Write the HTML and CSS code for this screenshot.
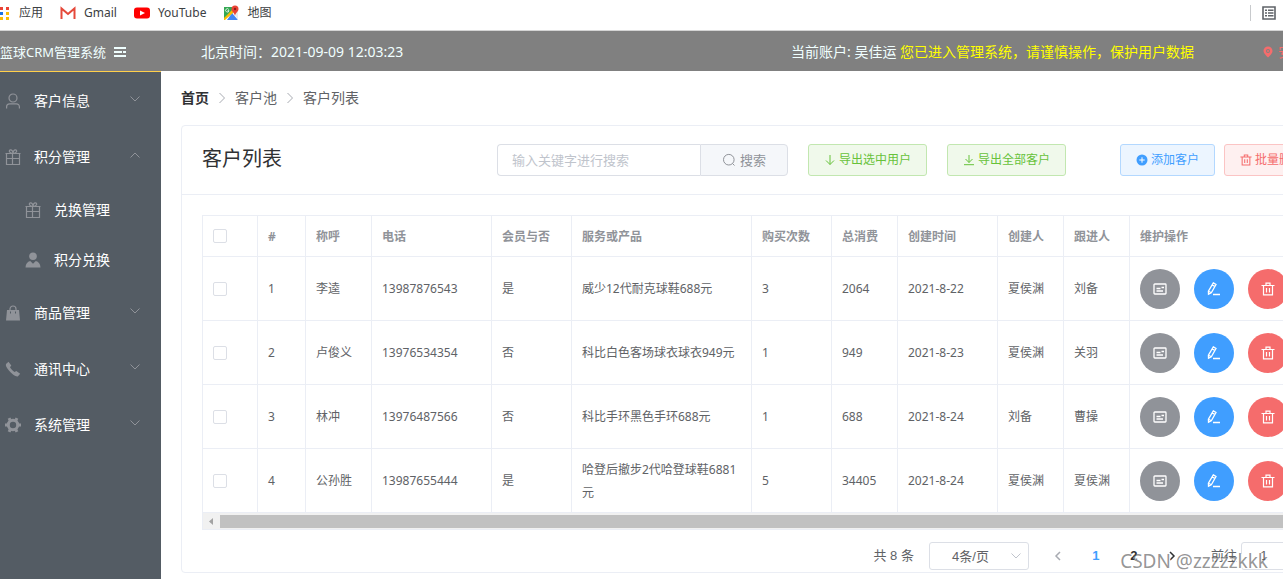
FILE: index.html
```html
<!DOCTYPE html>
<html lang="zh-CN">
<head>
<meta charset="utf-8">
<title>篮球CRM管理系统</title>
<link rel="stylesheet" href="styles.css">
</head>
<body>
<svg class="sprite" aria-hidden="true">
  <symbol id="user" viewBox="0 0 16 16"><circle cx="8" cy="5" r="4" fill="none" stroke="currentColor" stroke-width="1.2"/><path d="M1.6 15.5v-1.7a3 3 0 0 1 3-3h6.8a3 3 0 0 1 3 3v1.7" fill="none" stroke="currentColor" stroke-width="1.2"/></symbol>
  <symbol id="gift" viewBox="0 0 16 16"><path d="M.5 4.500h15M1.500 4.500v11h13v-11M1.500 9.500h13M7.500 4.500v11M8 4.500C4 4.500 3.500 1 5.500.8 7 .7 8 2.500 8 4.500 8 2.500 9 .7 10.500.8 12.500 1 12 4.500 8 4.500" fill="none" stroke="currentColor" stroke-width="1.200"/></symbol>
  <symbol id="user-solid" viewBox="0 0 16 16"><circle cx="8" cy="4.300" r="3.800" fill="currentColor"/><path d="M.5 15.500c.2-3.500 1.800-5.800 4.700-6.500L8 11.800 10.800 9c2.900.7 4.500 3 4.700 6.500z" fill="currentColor"/></symbol>
  <symbol id="bag" viewBox="0 0 16 16"><path d="M2 5h12l1 10.500H1zM5 6.500v2h1v-2zm5 0v2h1v-2z" fill="currentColor" fill-rule="evenodd"/><path d="M5 5V4a3 3 0 0 1 6 0v1" fill="none" stroke="currentColor" stroke-width="1.200"/></symbol>
  <symbol id="phone" viewBox="0 0 16 16"><path d="M1 3 3.500.8 6.300 4.500 5 6.200c1 1.800 2.600 3.500 4.600 4.700l1.700-.9 3.900 2.700-2.200 2.600c-1 .5-2.600 0-4.700-1.500C5 11.300 2.800 8.500 1.300 5.800.8 4.700.7 3.700 1 3z" fill="currentColor"/></symbol>
  <symbol id="gear" viewBox="0 0 16 16"><circle cx="8" cy="8" r="4.700" fill="none" stroke="currentColor" stroke-width="3"/><g stroke="currentColor" stroke-width="3"><path d="M0 8h3M13 8h3M4 1.100l1.200 2.200M12 1.100l-1.200 2.200M4 14.900l1.200-2.200M12 14.900l-1.200-2.200"/></g></symbol>
  <symbol id="down" viewBox="0 0 12 12"><path d="M1.500 3.500 6 8l4.500-4.500" fill="none" stroke="currentColor"/></symbol>
  <symbol id="right" viewBox="0 0 12 12"><path d="M3.500 1 8.500 6l-5 5" fill="none" stroke="currentColor"/></symbol>
  <symbol id="page-next" viewBox="0 0 12 12"><path d="M4 2l4 4-4 4" fill="none" stroke="currentColor" stroke-width="1.500"/></symbol>
  <symbol id="search" viewBox="0 0 14 14"><circle cx="6.800" cy="6.700" r="5.300" fill="none" stroke="currentColor"/><path d="m10.500 10.500 2 2" stroke="currentColor"/></symbol>
  <symbol id="arrow-down" viewBox="0 0 12 12"><path d="M6 1v9.500M2 6.500l4 4 4-4" fill="none" stroke="currentColor"/></symbol>
  <symbol id="download" viewBox="0 0 12 12"><path d="M6 1v7.500M2.500 5 6 8.500 9.500 5M1 10.700h10" fill="none" stroke="currentColor"/></symbol>
  <symbol id="plus" viewBox="0 0 12 12"><circle cx="6" cy="6" r="5.500" fill="currentColor"/><path d="M3.300 6h5.400M6 3.300v5.400" stroke="#fff"/></symbol>
  <symbol id="trash" viewBox="0 0 14 14"><path d="M.5 3.500h13M5 3V1.200h4V3M2.500 3.500v9.300h9V3.500M5.500 6v4.500M8.500 6v4.500" fill="none" stroke="currentColor" stroke-width="1.200"/></symbol>
  <symbol id="card" viewBox="0 0 14 14"><rect x="1" y="2" width="12" height="10" rx=".8" fill="none" stroke="currentColor" stroke-width="1.300"/><path d="M3.500 6.500h4M3.500 9h6.500M8.500 5.500h2.500" stroke="currentColor" stroke-width="1.500"/></symbol>
  <symbol id="edit" viewBox="0 0 14 14"><path d="M6.300.9 9 2.500 4.300 10.800 1.500 12.300 1.400 9.200zM5.200 2.900l2.700 1.600M1.500 9.200l2.800 1.600M6 12.500h7" fill="none" stroke="currentColor" stroke-width="1.300"/></symbol>
</svg>

<nav class="bookmarks" aria-label="书签栏">
  <a class="bookmark" href="#"><svg class="apps" viewBox="0 0 11 14"><path fill="#ea4335" d="M0 1h3v3H0zM6 1h3v3H6z"/><path fill="#1a73e8" d="M0 6h3v3H0z"/><path fill="#fbbc04" d="M6 6h3v3H6zM0 11h3v3H0zM6 11h3v3H6z"/></svg>应用</a>
  <a class="bookmark" href="#"><svg class="logo" viewBox="0 0 16 16"><path fill="#fff" d="M1 3h14v11H1z"/><path fill="none" stroke="#e5493a" stroke-width="2" d="M1.500 14V3.500L8 9l6.500-5.500V14"/></svg>Gmail</a>
  <a class="bookmark" href="#"><svg class="logo" viewBox="0 0 16 16"><rect y="2.500" width="16" height="11" rx="3" fill="red"/><path fill="#fff" d="m6 5.500 5 2.500-5 2.500z"/></svg>YouTube</a>
  <a class="bookmark" href="#"><svg class="logo" viewBox="0 0 16 16"><path fill="#34a853" d="M1 2h9v6L1 14z"/><path fill="#4285f4" d="m9 8 6 7H4z"/><path fill="#fbbc04" d="m9 5 2 2-9 8H1v-2z"/><path fill="#e8eaed" d="m10 7 5-2v10z"/><path fill="#ea4335" d="M8.500 4a3.500 3.500 0 0 1 7 0c0 3-3 3.500-3.500 7-.5-3.500-3.500-4-3.500-7z"/><circle cx="12" cy="4" r="1.200" fill="#8c1d18"/><path d="M5.800 4.500a1.700 1.700 0 1 0 .2 1.200H4.500" fill="none" stroke="#fff" stroke-width=".8"/></svg>地图</a>
  <button class="reading" type="button" aria-label="阅读清单"><svg viewBox="0 0 14 14"><path d="M1 1h12v12H1z" fill="none" stroke="#5f6368" stroke-width="1.600"/><path d="M3 4.200h2M6 4.200h5.500M3 7h2M6 7h5.500M3 9.800h2M6 9.800h5.500" stroke="#5f6368" stroke-width="1.400"/></svg></button>
</nav>

<div class="app">
  <header class="topbar">
    <span class="brand">篮球CRM管理系统<svg viewBox="0 0 12 12"><path d="M0 2h12M0 6h8M9 6h3M0 10h12" stroke="currentColor" stroke-width="2.200"/></svg></span>
    <span class="clock">北京时间：2021-09-09 12:03:23</span>
    <span class="account">当前账户: 吴佳运 <em>您已进入管理系统，请谨慎操作，保护用户数据</em></span>
    <a class="logout" href="#"><svg viewBox="0 0 12 12"><path fill="currentColor" fill-rule="evenodd" d="M6 .5a4.500 4.500 0 0 1 4.500 4.500c0 2.500-2.500 4.300-4.500 6.500C4 9.300 1.500 7.500 1.500 5A4.500 4.500 0 0 1 6 .5zM6 3a2 2 0 1 0 0 4 2 2 0 0 0 0-4z"/><circle cx="6" cy="5" r="1" fill="currentColor"/></svg>安全退出</a>
  </header>

  <div class="body">
    <nav class="menu">
      <a class="item" href="#"><svg class="mi"><use href="#user"/></svg>客户信息<svg class="caret"><use href="#down"/></svg></a>
      <a class="item" href="#"><svg class="mi"><use href="#gift"/></svg>积分管理<svg class="caret open"><use href="#down"/></svg></a>
      <a class="item sub" href="#"><svg class="mi"><use href="#gift"/></svg>兑换管理</a>
      <a class="item sub" href="#"><svg class="mi"><use href="#user-solid"/></svg>积分兑换</a>
      <a class="item" href="#"><svg class="mi"><use href="#bag"/></svg>商品管理<svg class="caret"><use href="#down"/></svg></a>
      <a class="item" href="#"><svg class="mi"><use href="#phone"/></svg>通讯中心<svg class="caret"><use href="#down"/></svg></a>
      <a class="item" href="#"><svg class="mi"><use href="#gear"/></svg>系统管理<svg class="caret"><use href="#down"/></svg></a>
    </nav>

    <main class="main">
      <nav class="crumbs" aria-label="面包屑"><a href="#">首页</a><svg><use href="#right"/></svg><span>客户池</span><svg><use href="#right"/></svg><span>客户列表</span></nav>

      <section class="card">
        <div class="card-head">
          <h1>客户列表</h1>
          <form class="search">
            <input type="text" placeholder="输入关键字进行搜索" aria-label="搜索关键字">
            <button type="button"><svg><use href="#search"/></svg>搜索</button>
          </form>
          <div class="exports">
            <button class="btn green" type="button"><svg><use href="#arrow-down"/></svg>导出选中用户</button>
            <button class="btn green" type="button"><svg><use href="#download"/></svg>导出全部客户</button>
          </div>
          <div class="edits">
            <button class="btn blue" type="button"><svg><use href="#plus"/></svg>添加客户</button>
            <button class="btn red" type="button"><svg><use href="#trash"/></svg>批量删除</button>
          </div>
        </div>

        <div class="card-body">
          <div class="table-wrap">
            <table>
              <colgroup><col class="w55"><col class="w48"><col class="w66"><col class="w120"><col class="w80"><col class="w180"><col class="w80"><col class="w66"><col class="w100"><col class="w66"><col class="w66"><col class="w240"></colgroup>
              <thead>
                <tr><th><input type="checkbox" aria-label="全选"></th><th>#</th><th>称呼</th><th>电话</th><th>会员与否</th><th>服务或产品</th><th>购买次数</th><th>总消费</th><th>创建时间</th><th>创建人</th><th>跟进人</th><th>维护操作</th></tr>
              </thead>
              <tbody>
                <tr><td><input type="checkbox" aria-label="选择李逵"></td><td>1</td><td>李逵</td><td>13987876543</td><td>是</td><td>威少12代耐克球鞋688元</td><td>3</td><td>2064</td><td>2021-8-22</td><td>夏侯渊</td><td>刘备</td><td><div class="ops"><button class="gray" type="button" aria-label="详情"><svg><use href="#card"/></svg></button><button class="edit" type="button" aria-label="编辑"><svg><use href="#edit"/></svg></button><button class="del" type="button" aria-label="删除"><svg><use href="#trash"/></svg></button></div></td></tr>
                <tr><td><input type="checkbox" aria-label="选择卢俊义"></td><td>2</td><td>卢俊义</td><td>13976534354</td><td>否</td><td>科比白色客场球衣球衣949元</td><td>1</td><td>949</td><td>2021-8-23</td><td>夏侯渊</td><td>关羽</td><td><div class="ops"><button class="gray" type="button" aria-label="详情"><svg><use href="#card"/></svg></button><button class="edit" type="button" aria-label="编辑"><svg><use href="#edit"/></svg></button><button class="del" type="button" aria-label="删除"><svg><use href="#trash"/></svg></button></div></td></tr>
                <tr><td><input type="checkbox" aria-label="选择林冲"></td><td>3</td><td>林冲</td><td>13976487566</td><td>否</td><td>科比手环黑色手环688元</td><td>1</td><td>688</td><td>2021-8-24</td><td>刘备</td><td>曹操</td><td><div class="ops"><button class="gray" type="button" aria-label="详情"><svg><use href="#card"/></svg></button><button class="edit" type="button" aria-label="编辑"><svg><use href="#edit"/></svg></button><button class="del" type="button" aria-label="删除"><svg><use href="#trash"/></svg></button></div></td></tr>
                <tr><td><input type="checkbox" aria-label="选择公孙胜"></td><td>4</td><td>公孙胜</td><td>13987655444</td><td>是</td><td>哈登后撤步2代哈登球鞋6881元</td><td>5</td><td>34405</td><td>2021-8-24</td><td>夏侯渊</td><td>夏侯渊</td><td><div class="ops"><button class="gray" type="button" aria-label="详情"><svg><use href="#card"/></svg></button><button class="edit" type="button" aria-label="编辑"><svg><use href="#edit"/></svg></button><button class="del" type="button" aria-label="删除"><svg><use href="#trash"/></svg></button></div></td></tr>
              </tbody>
            </table>
            <div class="scrollbar"><svg viewBox="0 0 17 17"><path d="M10 5v7L6 8.500z" fill="#a3a3a3"/></svg><div class="thumb"></div></div>
          </div>

          <div class="pager">
            <span>共 8 条</span>
            <div class="size"><select aria-label="每页条数"><option>4条/页</option></select><svg><use href="#down"/></svg></div>
            <div class="pages">
              <button class="prev" type="button" aria-label="上一页"><svg><use href="#page-next"/></svg></button>
              <button class="current" type="button">1</button>
              <button type="button">2</button>
              <button type="button" aria-label="下一页"><svg><use href="#page-next"/></svg></button>
            </div>
            <label class="jump">前往<input type="text" value="1">页</label>
          </div>
        </div>
      </section>
    </main>
  </div>
</div>
<div class="watermark">CSDN @zzzzzkkk</div>
</body>
</html>
```
FILE: styles.css
```css
* { box-sizing: border-box; }

body {
  margin: 0;
  height: 100vh;
  display: flex;
  flex-direction: column;
  overflow: hidden;
  position: relative;
  background: #fff;
  color: #606266;
  font: 14px/20px "Noto Sans", "Noto Sans CJK SC", sans-serif;
}

button, input, select { font: inherit; color: inherit; margin: 0; }
button { cursor: pointer; padding: 0; border: 0; background: none; }
a { color: inherit; text-decoration: none; }
svg { display: block; flex: none; }
.sprite { position: absolute; width: 0; height: 0; }

/* Browser bookmarks */
.bookmarks {
  flex: none;
  display: flex;
  align-items: center;
  gap: 17px;
  height: 31px;
  padding: 0 7px 5px 0;
  border-bottom: 1px solid #d4d4d4;
  color: #3c4043;
  font-size: 12px;
}
.bookmark { display: flex; align-items: center; gap: 8px; }
.apps { width: 11px; height: 14px; }
.logo { width: 16px; height: 16px; }
.reading { margin-left: auto; padding-left: 11px; border-left: 1px solid #c8cacd; }
.reading svg { width: 14px; height: 16px; }

/* Top bar */
.app {
  flex: 1;
  min-height: 0;
  min-width: 1356px;
  display: flex;
  flex-direction: column;
}
.topbar {
  flex: none;
  display: flex;
  align-items: center;
  height: 40px;
  padding-top: 2px;
  background: gray;
  color: #f0ffff;
}
.brand { width: 201px; display: flex; align-items: center; gap: 8px; font-size: 13px; }
.brand svg { width: 12px; height: 12px; }
.clock { width: 590px; }
.account em { color: #ff0; font-style: normal; }
.logout {
  margin-left: auto;
  margin-right: 22px;
  display: flex;
  align-items: center;
  gap: 4px;
  color: #f56c6c;
}
.logout svg { width: 12px; height: 12px; }

/* Side menu */
.body { flex: 1; min-height: 0; display: flex; }
.menu {
  width: 161px;
  flex: none;
  padding-top: 1px;
  border-top: 1px solid #ffd04b;
  background: #545c64;
  color: #fff;
}
.item { display: flex; align-items: center; height: 56px; padding: 0 20px 0 5px; }
.item.sub { height: 50px; padding-left: 25px; }
.mi { width: 16px; height: 16px; margin-right: 13px; color: #909399; }
.caret { width: 12px; height: 12px; margin: 0 0 4px auto; color: #909399; }
.caret.open { transform: rotate(180deg); }

/* Content */
.main { flex: 1; min-width: 0; padding: 17px 20px 0; }
.crumbs { display: flex; align-items: center; gap: 7px; margin-bottom: 17px; }
.crumbs a { color: #303133; font-weight: 700; }
.crumbs svg { width: 12px; height: 12px; color: #a8abb2; }

.card { border: 1px solid #ebeef5; border-radius: 4px; color: #303133; }
.card-head {
  display: flex;
  align-items: center;
  height: 69px;
  padding: 0 16px 0 20px;
  border-bottom: 1px solid #ebeef5;
}
h1 { margin: 0; width: 295px; padding-bottom: 2px; font-size: 20px; line-height: 28px; font-weight: 400; }
.search { display: flex; width: 291px; height: 32px; margin-right: 20px; font-size: 13px; color: #909399; }
.search input {
  flex: 1;
  min-width: 0;
  padding: 0 14px;
  border: 1px solid #dcdfe6;
  border-right: 0;
  border-radius: 4px 0 0 4px;
  outline: 0;
}
.search input::placeholder { color: #c0c4cc; opacity: 1; }
.search button {
  display: flex;
  align-items: center;
  justify-content: center;
  gap: 4px;
  width: 88px;
  border: 1px solid #dcdfe6;
  border-radius: 0 4px 4px 0;
  background: #f5f7fa;
}
.search svg { width: 14px; height: 14px; }
.exports { display: flex; gap: 20px; }
.edits { display: flex; gap: 9px; margin-left: auto; }
.btn {
  display: flex;
  align-items: center;
  gap: 3px;
  height: 32px;
  padding: 0 15px;
  border: 1px solid;
  border-radius: 3px;
  font-size: 12px;
  white-space: nowrap;
}
.btn svg { width: 12px; height: 12px; }
.green { color: #67c23a; background: #f0f9eb; border-color: #c2e7b0; }
.blue { color: #409eff; background: #ecf5ff; border-color: #b3d8ff; }
.red { color: #f56c6c; background: #fef0f0; border-color: #fbc4c4; }

.card-body { padding: 20px 20px 2px; }
.table-wrap { overflow: hidden; border: 1px solid #ebeef5; border-width: 1px 0 1px 1px; }
table {
  table-layout: fixed;
  width: 1167px;
  border-collapse: separate;
  border-spacing: 0;
  color: #606266;
  font-size: 12px;
  line-height: 23px;
}
th, td {
  height: 64px;
  padding: 0 10px;
  border: 1px solid #ebeef5;
  border-width: 0 1px 1px 0;
  text-align: left;
}
th { height: 41px; color: #909399; font-weight: 700; }
.w48 { width: 48px; }
.w55 { width: 55px; }
.w66 { width: 66px; }
.w80 { width: 80px; }
.w100 { width: 100px; }
.w120 { width: 120px; }
.w180 { width: 180px; }
.w240 { width: 240px; }
[type="checkbox"] {
  display: block;
  appearance: none;
  width: 14px;
  height: 14px;
  border: 1px solid #dcdfe6;
  border-radius: 2px;
  background: #fff;
}
.ops { display: flex; gap: 14px; }
.ops button {
  display: grid;
  place-items: center;
  width: 40px;
  height: 40px;
  border-radius: 50%;
  color: #fff;
}
.ops svg { width: 14px; height: 14px; }
.ops .gray { background: #909399; }
.ops .edit { background: #409eff; }
.ops .del { background: #f56c6c; }

.scrollbar { display: flex; align-items: center; height: 16px; background: #f1f1f1; }
.scrollbar svg { width: 17px; height: 17px; }
.thumb { width: 100%; height: 13px; background: #c1c1c1; }

/* Pagination */
.pager {
  display: flex;
  align-items: center;
  justify-content: flex-end;
  height: 28px;
  margin-top: 12px;
  color: #606266;
  font: 13px/28px "Liberation Sans", "Noto Sans CJK SC", sans-serif;
}
.size { display: grid; align-items: center; width: 100px; margin: 0 10px 0 15px; }
.size select, .size svg { grid-area: 1 / 1; }
.size select {
  appearance: none;
  width: 100%;
  height: 28px;
  padding: 0 25px 0 8px;
  border: 1px solid #dcdfe6;
  border-radius: 3px;
  background: #fff;
  text-align-last: center;
}
.size svg { justify-self: end; width: 12px; height: 12px; margin-right: 7px; color: #c0c4cc; pointer-events: none; }
.pages { display: flex; color: #303133; font-weight: 700; }
.pages button { display: grid; place-items: center; width: 38px; height: 28px; }
.pages svg { width: 12px; height: 12px; }
.pages .prev { color: #a8abb2; }
.pages .prev svg { transform: rotate(180deg); }
.pages .current { color: #409eff; }
.jump { display: flex; align-items: center; margin-left: 20px; }
.jump input {
  width: 46px;
  height: 28px;
  margin: 0 15px 0 4px;
  padding: 0;
  border: 1px solid #dcdfe6;
  border-radius: 3px;
  text-align: center;
}

.watermark {
  position: absolute;
  right: 15px;
  bottom: 6px;
  color: rgba(90, 90, 90, 0.65);
  font-size: 19px;
  line-height: 24px;
  text-shadow: 1px 1px 0 #fff;
  pointer-events: none;
}
```
